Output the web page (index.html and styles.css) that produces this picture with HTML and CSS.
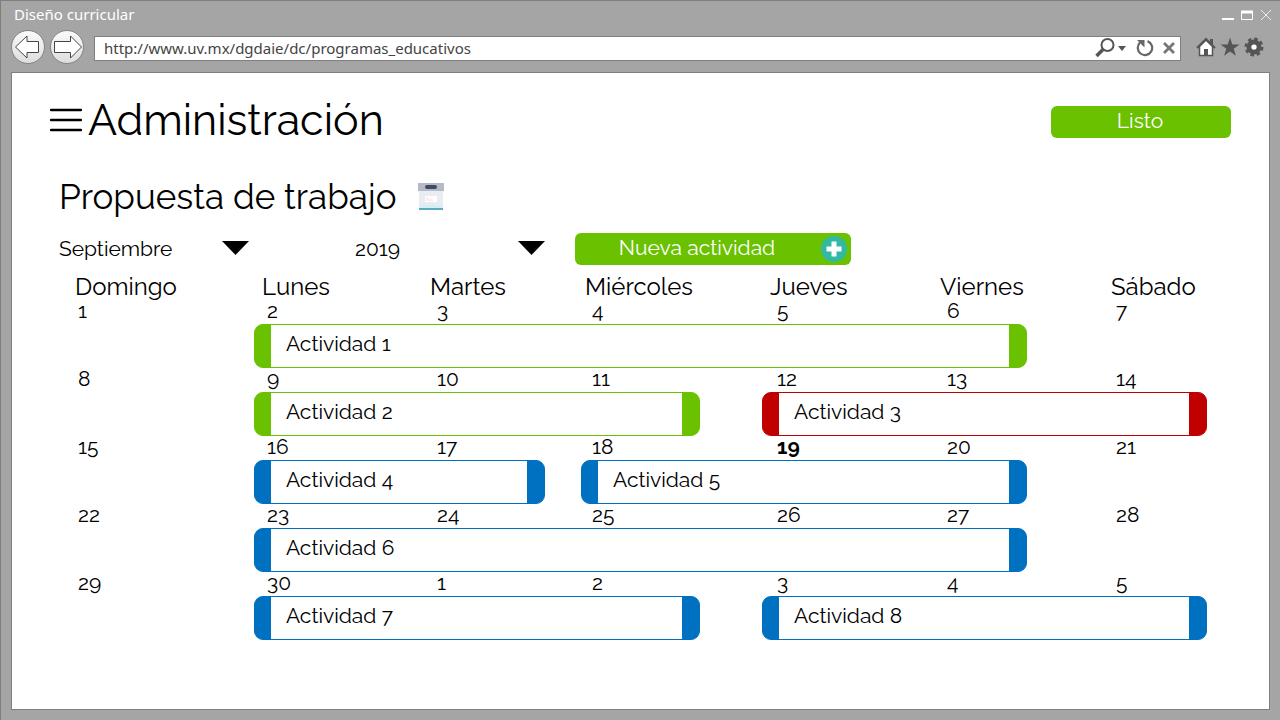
FILE: index.html
```html
<!DOCTYPE html>
<html lang="es">
<head>
<meta charset="utf-8">
<title>Diseño curricular</title>
<meta name="viewport" content="width=device-width, initial-scale=1">
<link rel="stylesheet" href="styles.css">
</head>
<body>
<div class="window">
  <header class="titlebar">
    <span class="window-title">Diseño curricular</span>
    <div class="window-controls">
      <button class="icon-button" type="button" aria-label="Minimizar"><svg width="12" height="12" viewBox="0 0 12 12"><path d="M0 10h12" stroke="#fff" stroke-width="2"/></svg></button>
      <button class="icon-button" type="button" aria-label="Maximizar"><svg width="12" height="12" viewBox="0 0 12 12"><path d="M.5 2.500h11v8H.5z" fill="none" stroke="#fff"/><path d="M0 3h12" stroke="#fff" stroke-width="3"/></svg></button>
      <button class="icon-button" type="button" aria-label="Cerrar"><svg width="12" height="12" viewBox="0 0 12 12"><path d="M1 1l10 10M11 1L1 11" stroke="#eee" stroke-width="1"/></svg></button>
    </div>
  </header>
  <div class="toolbar">
    <div class="nav">
      <button class="nav-button" type="button" aria-label="Atrás"><svg width="32" height="32" viewBox="0 0 32 32"><path d="M3.500 16L15 5v5.500h11.500v11H15v5.500z" fill="#fff" stroke="#444" stroke-width="1"/></svg></button>
      <button class="nav-button" type="button" aria-label="Adelante"><svg width="32" height="32" viewBox="0 0 32 32"><path d="M30.500 16L19.500 5v5.500h-16v11h16v5.500z" fill="#fff" stroke="#444" stroke-width="1"/></svg></button>
    </div>
    <div class="address">
      <input class="address-input" type="text" aria-label="Dirección" value="http://www.uv.mx/dgdaie/dc/programas_educativos">
      <button class="icon-button search" type="button" aria-label="Buscar"><svg width="32" height="20" viewBox="0 0 32 20"><circle cx="12.500" cy="7" r="6" fill="none" stroke="#555" stroke-width="2"/><path d="M8 11.500L1.500 18" stroke="#555" stroke-width="3.500"/><path d="M23 8h8l-4 5z" fill="#555"/></svg></button>
      <button class="icon-button reload" type="button" aria-label="Actualizar"><svg width="18" height="18" viewBox="0 0 18 18"><path d="M11.500 2.100A7.200 7.200 0 1 1 4 3.600" fill="none" stroke="#666" stroke-width="2.200"/><path d="M1 1h7.500v7.500z" fill="#666"/></svg></button>
      <button class="icon-button stop" type="button" aria-label="Detener"><svg width="12" height="12" viewBox="0 0 12 12"><path d="M1 1l10 10M11 1L1 11" stroke="#777" stroke-width="2.800"/></svg></button>
    </div>
    <div class="tools">
      <button class="icon-button" type="button" aria-label="Inicio"><svg width="20" height="20" viewBox="0 0 20 20"><path d="M14 2h3v6h-3z" fill="#555"/><path d="M3.500 9.500L10 3l6.500 6.500v9h-13z" fill="#fff" stroke="#555" stroke-width="1.500"/><path d="M1 11l9-9 9 9" fill="none" stroke="#555" stroke-width="2"/><path d="M8 12h4v7H8z" fill="#555"/></svg></button>
      <button class="icon-button" type="button" aria-label="Favoritos"><svg width="20" height="20" viewBox="0 0 20 20"><path d="M10 0.500l2.300 6.900h7.200l-5.800 4.300 2.200 7L10 14.500l-5.900 4.200 2.200-7L.5 7.400h7.200z" fill="#555"/></svg></button>
      <button class="icon-button" type="button" aria-label="Configuración"><svg width="20" height="20" viewBox="0 0 20 20"><circle cx="10" cy="10" r="5" fill="none" stroke="#555" stroke-width="5"/><circle cx="10" cy="10" r="8.200" fill="none" stroke="#555" stroke-width="2.600" stroke-dasharray="3.500 2.940"/><circle cx="10" cy="10" r="2.600" fill="#fff"/></svg></button>
    </div>
  </div>

  <main class="page">
    <div class="page-header">
      <button class="icon-button" type="button" aria-label="Menú"><svg width="32" height="24" viewBox="0 0 32 24"><path d="M1 2h30M1 12h30M1 22h30" stroke="#000" stroke-width="2.500" stroke-linecap="round"/></svg></button>
      <h1 class="page-title">Administración</h1>
      <button class="button done" type="button">Listo</button>
    </div>

    <div class="section-header">
      <h2 class="section-title">Propuesta de trabajo</h2>
      <svg class="archive" width="26" height="28" viewBox="0 0 26 28" aria-hidden="true"><path d="M1 8h24v19H1z" fill="#e9edf1"/><path d="M0 0h26v8H0z" fill="#b4bac7"/><rect x="7" y="2" width="12" height="4" rx="2" fill="#3f4b5e"/><path d="M7 13h12v6H7z" fill="#fff"/><path d="M8 15h2M8 17h7" stroke="#e5cfd6" stroke-width=".7"/><path d="M1 22h24v3H1z" fill="#d5eff4"/><path d="M1 25h24v2H1z" fill="#5caabd"/></svg>
    </div>

    <div class="filters">
      <div class="picker"><select class="picker-select" aria-label="Mes"><option>Septiembre</option></select></div>
      <div class="picker year"><select class="picker-select" aria-label="Año"><option>2019</option></select></div>
      <button class="button new-activity" type="button"><span class="new-label">Nueva actividad</span><svg width="26" height="26" viewBox="0 0 26 26" aria-hidden="true"><circle cx="13" cy="13" r="13" fill="#32b9a4"/><path d="M13 5.500v15M5.500 13h15" stroke="#fff" stroke-width="5"/></svg></button>
    </div>

    <table class="calendar">
      <colgroup><col class="w-sun"><col class="w-mon"><col class="w-tue-a"><col class="w-tue-b"><col class="w-wed-a"><col class="w-wed-b"><col class="w-thu"><col class="w-fri-a"><col class="w-fri-b"><col class="w-sat"></colgroup>
      <thead>
        <tr><th scope="col">Domingo</th><th scope="col">Lunes</th><th scope="col" colspan="2" class="tue">Martes</th><th scope="col" colspan="2" class="wed">Miércoles</th><th scope="col">Jueves</th><th scope="col" colspan="2">Viernes</th><th scope="col">Sábado</th></tr>
      </thead>
      <tbody>
        <tr class="dates"><td>1</td><td>2</td><td colspan="2">3</td><td colspan="2">4</td><td>5</td><td colspan="2">6</td><td>7</td></tr>
        <tr class="bars"><td></td><td colspan="7"><div class="activity green">Actividad 1</div></td><td colspan="2"></td></tr>
        <tr class="dates"><td>8</td><td>9</td><td colspan="2">10</td><td colspan="2">11</td><td>12</td><td colspan="2">13</td><td>14</td></tr>
        <tr class="bars"><td></td><td colspan="4"><div class="activity green">Actividad 2</div></td><td></td><td colspan="4"><div class="activity red">Actividad 3</div></td></tr>
        <tr class="dates"><td>15</td><td>16</td><td colspan="2">17</td><td colspan="2">18</td><td class="today">19</td><td colspan="2">20</td><td>21</td></tr>
        <tr class="bars"><td></td><td colspan="2"><div class="activity blue">Actividad 4</div></td><td></td><td colspan="4"><div class="activity blue">Actividad 5</div></td><td colspan="2"></td></tr>
        <tr class="dates"><td>22</td><td>23</td><td colspan="2">24</td><td colspan="2">25</td><td>26</td><td colspan="2">27</td><td>28</td></tr>
        <tr class="bars"><td></td><td colspan="7"><div class="activity blue">Actividad 6</div></td><td colspan="2"></td></tr>
        <tr class="dates"><td>29</td><td>30</td><td colspan="2">1</td><td colspan="2">2</td><td>3</td><td colspan="2">4</td><td>5</td></tr>
        <tr class="bars"><td></td><td colspan="4"><div class="activity blue">Actividad 7</div></td><td></td><td colspan="4"><div class="activity blue">Actividad 8</div></td></tr>
      </tbody>
    </table>
  </main>
</div>
</body>
</html>
```
FILE: styles.css
```css
* { box-sizing: border-box; }

body {
  margin: 0;
  color: #000;
  font-family: Raleway, Lato, "Open Sans", sans-serif;
}

button, select, input { font: inherit; color: inherit; }

.window {
  display: flex;
  flex-direction: column;
  min-height: 100vh;
  padding: 0 10px 10px;
  background: #a5a5a5;
  border-top: 1px solid #7f7f7f;
  border-left: 1px solid #7f7f7f;
}

.icon-button {
  display: flex;
  padding: 0;
  background: none;
  border: 0;
}

.titlebar {
  display: flex;
  align-items: center;
  justify-content: space-between;
  height: 28px;
  padding-left: 3px;
  color: #fff;
  font: 15px/20px "Noto Sans", "Open Sans", sans-serif;
}

.window-title { margin-top: -2px; }

.window-controls { display: flex; gap: 7px; margin-right: -2px; }

.toolbar {
  display: flex;
  align-items: center;
  height: 36px;
}

.nav { display: flex; gap: 5px; }

.nav-button {
  display: flex;
  width: 34px;
  height: 34px;
  padding: 0;
  background: linear-gradient(#fafafa, #dedede);
  border: 1px solid #858585;
  border-radius: 50%;
}

.address {
  display: flex;
  flex: 1;
  align-items: center;
  height: 25px;
  margin: 2px 15px 0 10px;
  padding-right: 5px;
  background: #fff;
  border: 1px solid #7f7f7f;
}

.address-input {
  flex: 1;
  min-width: 0;
  padding: 0 9px;
  color: #444;
  background: none;
  border: 0;
  font: 15px/20px "Noto Sans", "Open Sans", sans-serif;
}

.reload { margin: 0 9px; }

.tools { display: flex; gap: 4px; margin-right: 6px; }

.page {
  flex: 1;
  margin-top: 7px;
  padding: 23px 38px 0;
  background: #fff;
  border: 1px solid #7f7f7f;
}

.page-header {
  display: flex;
  align-items: center;
  height: 48px;
}

.page-title {
  flex: 1;
  margin: 0 0 0 6px;
  font-size: 43px;
  line-height: 48px;
  font-weight: 400;
}

.button {
  height: 32px;
  padding: 0;
  color: #fff;
  background: #69c100;
  border: 0;
  border-radius: 6px;
  font-size: 21px;
  line-height: 28px;
}

.done {
  width: 180px;
  margin-top: 4px;
  padding: 0 2px 2px 0;
}

.section-header {
  display: flex;
  align-items: center;
  gap: 21px;
  height: 48px;
  margin: 29px 9px 0;
}

.section-title {
  margin: 0;
  font-size: 35px;
  line-height: 48px;
  font-weight: 400;
}

.filters {
  display: flex;
  align-items: center;
  margin: 12px 9px 0;
}

.picker {
  position: relative;
  width: 190px;
}

.picker::after {
  content: "";
  position: absolute;
  top: 8px;
  right: 0;
  width: 27px;
  height: 14px;
  background: #000;
  clip-path: polygon(0 0, 100% 0, 50% 100%);
  pointer-events: none;
}

.picker-select {
  width: 100%;
  height: 32px;
  padding: 0 0 2px;
  appearance: none;
  background: none;
  border: 0;
  font-size: 21px;
}

.year { margin: 0 30px 0 106px; }

.new-activity {
  display: flex;
  align-items: center;
  width: 276px;
  padding-right: 4px;
}

.new-label {
  flex: 1;
  padding: 0 2px 2px 0;
}

.calendar {
  width: calc(100% - 41px);
  margin: 9px 24px 0 17px;
  table-layout: fixed;
  border-collapse: collapse;
  text-align: left;
}

.w-sun { width: 187px; }
.w-mon { width: 170px; }
.w-tue-a { width: 121px; }
.w-tue-b { width: 36px; }
.w-wed-a { width: 119px; }
.w-wed-b { width: 62px; }
.w-thu { width: 170px; }
.w-fri-a { width: 95px; }
.w-fri-b { width: 76px; }
.w-sat { width: 104px; }

.calendar th {
  height: 26px;
  padding: 0 8px;
  font-size: 24px;
  line-height: 26px;
  font-weight: 400;
}

.calendar .tue { padding-left: 6px; }
.calendar .wed { padding-left: 4px; }

.dates td {
  height: 24px;
  padding: 0 13px;
  font-size: 21px;
  line-height: 22px;
  vertical-align: top;
}

.dates td:nth-child(1),
.dates td:nth-child(4) { padding-left: 11px; }

.dates td:nth-child(5),
.dates td:nth-child(6) { padding-left: 15px; }

.dates .today { font-weight: 700; }

.bars td { height: 44px; padding: 0; }

.activity {
  height: 44px;
  padding: 0 32px 0 31px;
  border: 1px solid var(--tone);
  border-radius: 9px;
  background: linear-gradient(90deg, var(--tone) 16px, #fff 16px, #fff calc(100% - 17px), var(--tone) calc(100% - 17px));
  font-size: 21px;
  line-height: 38px;
}

.green { --tone: #69c100; }
.red { --tone: #c00000; }
.blue { --tone: #0070c0; }
```
